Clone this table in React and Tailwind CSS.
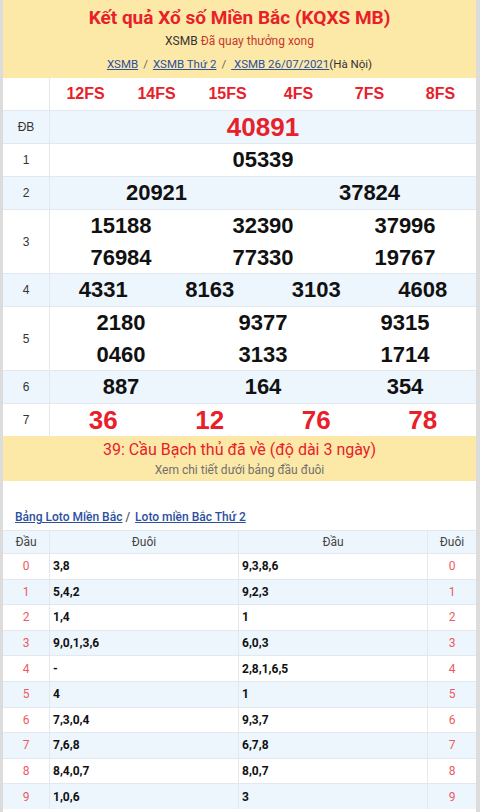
import React from 'react';

const prizes = [
  { label: 'ĐB', cols: 1, nums: ['40891'], big: true, red: true },
  { label: '1', cols: 1, nums: ['05339'] },
  { label: '2', cols: 2, nums: ['20921', '37824'] },
  { label: '3', cols: 3, nums: ['15188', '32390', '37996', '76984', '77330', '19767'] },
  { label: '4', cols: 4, nums: ['4331', '8163', '3103', '4608'] },
  { label: '5', cols: 3, nums: ['2180', '9377', '9315', '0460', '3133', '1714'] },
  { label: '6', cols: 3, nums: ['887', '164', '354'] },
  { label: '7', cols: 4, nums: ['36', '12', '76', '78'], big: true, red: true },
];

const gridCols = {
  1: 'grid-cols-1',
  2: 'grid-cols-2',
  3: 'grid-cols-3',
  4: 'grid-cols-4',
};

const loto = [
  ['3,8', '9,3,8,6'],
  ['5,4,2', '9,2,3'],
  ['1,4', '1'],
  ['9,0,1,3,6', '6,0,3'],
  ['-', '2,8,1,6,5'],
  ['4', '1'],
  ['7,3,0,4', '9,3,7'],
  ['7,6,8', '6,7,8'],
  ['8,4,0,7', '8,0,7'],
  ['1,0,6', '3'],
];

export default function App() {
  return (
    <div className="w-[480px] h-[812px] overflow-hidden bg-white border-l-[3px] border-r-[4px] border-[#dcdcdc] font-['Liberation_Sans',Arial,sans-serif]">
      {/* header */}
      <div className="h-[78px] bg-[#fde9a7] flex flex-col items-center pt-[5px] font-['Roboto',sans-serif]">
        <h1 className="text-[19px] leading-[26px] font-bold text-[#e8202a]">Kết quả Xổ số Miền Bắc (KQXS MB)</h1>
        <p className="text-[12px] leading-[18px] mt-[1px] text-[#333]">
          XSMB <span className="text-[#c8372d]">Đã quay thưởng xong</span>
        </p>
        <p className="text-[11.5px] leading-[16px] mt-[6px] text-[#333]">
          <a className="text-[#2c4f9e] underline">XSMB</a>
          <span className="text-[#666] mx-[5px]">/</span>
          <a className="text-[#2c4f9e] underline">XSMB Thứ 2</a>
          <span className="text-[#666] mx-[5px]">/</span>
          <a className="text-[#2c4f9e] underline"> XSMB 26/07/2021</a>
          (Hà Nội)
        </p>
      </div>

      {/* result table */}
      <div className="flex h-[32px]">
        <div className="w-[47px] border-r border-[#e3e8ee]" />
        <div className="flex-1 grid grid-cols-6 items-center text-center text-[16px] font-bold text-[#e8202a]">
          <span>12FS</span>
          <span>14FS</span>
          <span>15FS</span>
          <span>4FS</span>
          <span>7FS</span>
          <span>8FS</span>
        </div>
      </div>
      {prizes.map((p, i) => {
        const lines = Math.ceil(p.nums.length / p.cols);
        return (
          <div
            key={p.label}
            className={`flex border-t border-[#e3e8ee] ${i % 2 === 0 ? 'bg-[#eef6fd]' : 'bg-white'}`}
          >
            <div className="w-[47px] shrink-0 border-r border-[#e3e8ee] flex items-center justify-center text-[12px] text-[#333]">
              {p.label}
            </div>
            <div
              className={`flex-1 grid ${gridCols[p.cols]} items-center text-center font-bold ${
                p.red ? 'text-[#e8202a]' : 'text-[#111]'
              } ${p.big ? 'text-[26px]' : 'text-[22px]'}`}
            >
              {p.nums.map((n, k) => (
                <span key={k} className={lines > 1 ? 'leading-[31.5px]' : 'leading-[32px]'}>
                  {n}
                </span>
              ))}
            </div>
          </div>
        );
      })}

      {/* banner */}
      <div className="h-[45px] bg-[#fde9a7] flex flex-col items-center justify-center font-['Roboto',sans-serif]">
        <p className="text-[16px] leading-[20px] text-[#e8202a]">39: Cầu Bạch thủ đã về (độ dài 3 ngày)</p>
        <p className="text-[12px] leading-[16px] text-[#707070] mt-[2px]">Xem chi tiết dưới bảng đầu đuôi</p>
      </div>

      {/* loto */}
      <div className="font-['Roboto',sans-serif]">
        <div className="h-[49px] flex items-end pb-[4px] pl-[12px] text-[12px] font-medium">
          <a className="text-[#2c4f9e] underline">Bảng Loto Miền Bắc</a>
          <span className="text-[#555] mx-[3px]">/</span>
          <a className="text-[#2c4f9e] underline ml-[2px]">Loto miền Bắc Thứ 2</a>
        </div>
        <div className="grid grid-cols-[47px_1fr_1fr_48px] h-[23px] bg-[#eef6fd] border-t border-[#e3e8ee] text-[12px] text-[#444]">
          <div className="flex items-center justify-center border-r border-[#e3e8ee]">Đầu</div>
          <div className="flex items-center justify-center border-r border-[#e3e8ee]">Đuôi</div>
          <div className="flex items-center justify-center border-r border-[#e3e8ee]">Đầu</div>
          <div className="flex items-center justify-center">Đuôi</div>
        </div>
        {loto.map((r, i) => (
          <div
            key={i}
            className={`grid grid-cols-[47px_1fr_1fr_48px] h-[25.6px] border-t border-[#e3e8ee] text-[12px] ${
              i % 2 === 0 ? 'bg-white' : 'bg-[#eef6fd]'
            }`}
          >
            <div className="flex items-center justify-center border-r border-[#e3e8ee] text-[#ec5a64]">{i}</div>
            <div className="flex items-center pl-[3px] border-r border-[#e3e8ee] font-bold text-[#111]">{r[0]}</div>
            <div className="flex items-center pl-[3px] border-r border-[#e3e8ee] font-bold text-[#111]">{r[1]}</div>
            <div className="flex items-center justify-center text-[#ec5a64]">{i}</div>
          </div>
        ))}
      </div>
    </div>
  );
}
